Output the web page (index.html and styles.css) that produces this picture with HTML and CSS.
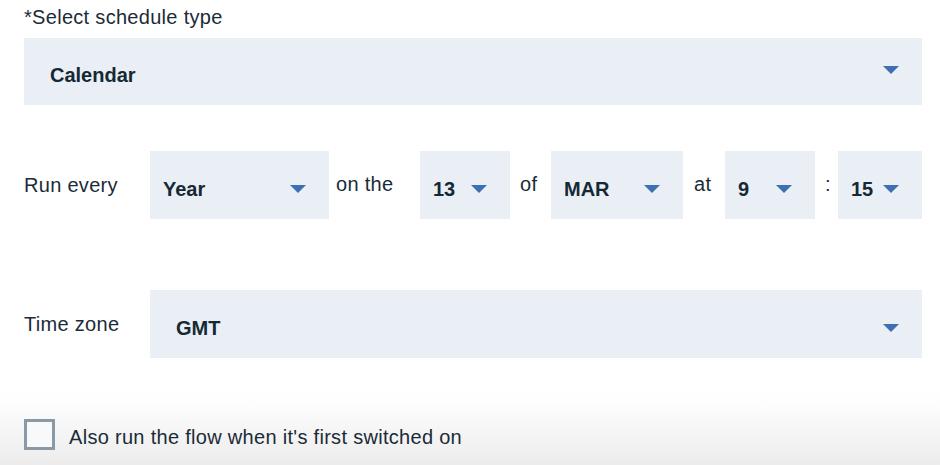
FILE: index.html
```html
<!DOCTYPE html>
<html>
<head>
<meta charset="utf-8">
<link rel="stylesheet" href="styles.css">
</head>
<body>
<div class="page">
  <div class="field-label">*Select schedule type</div>
  <div class="select select-wide select-first">
    <span class="value">Calendar</span>
    <span class="arrow"></span>
  </div>

  <div class="row row-run">
    <div class="row-label">Run every</div>
    <div class="select s-year"><span class="value">Year</span><span class="arrow"></span></div>
    <div class="conn c-onthe">on the</div>
    <div class="select s-day"><span class="value">13</span><span class="arrow"></span></div>
    <div class="conn c-of">of</div>
    <div class="select s-month"><span class="value">MAR</span><span class="arrow"></span></div>
    <div class="conn c-at">at</div>
    <div class="select s-hour"><span class="value">9</span><span class="arrow"></span></div>
    <div class="conn c-colon">:</div>
    <div class="select s-min"><span class="value">15</span><span class="arrow"></span></div>
  </div>

  <div class="row row-tz">
    <div class="row-label">Time zone</div>
    <div class="select select-fill"><span class="value">GMT</span><span class="arrow"></span></div>
  </div>
</div>
<div class="footer">
  <label class="check">
    <span class="box"></span>
    <span class="check-text">Also run the flow when it's first switched on</span>
  </label>
</div>
</body>
</html>
```

FILE: styles.css
```css
* { box-sizing: border-box; }
html, body {
  margin: 0;
  padding: 0;
  background: #ffffff;
  width: 940px;
  height: 465px;
  overflow: hidden;
}
body {
  font-family: "Liberation Sans", Arial, sans-serif;
  font-size: 20px;
  letter-spacing: 0.3px;
  color: #1b2b38;
}
.page {
  padding: 0 18px 0 24px;
}
.field-label {
  height: 38px;
  padding-top: 5px;
  line-height: 24px;
}
.select {
  background: #eaeff6;
  display: flex;
  align-items: center;
  padding: 0 23px 0 13px;
  position: relative;
}
.select .value {
  font-weight: 700;
  font-size: 20px;
  letter-spacing: 0;
  color: #152935;
  flex: 1;
  padding-top: 8px;
}
.arrow {
  width: 0;
  height: 0;
  border-left: 8px solid transparent;
  border-right: 8px solid transparent;
  border-top: 8px solid #3d70b2;
  flex: none;
}
.select-first {
  height: 67px;
  padding-left: 26px;
}
.select-first .value { padding-top: 7px; }
.select-first .arrow { margin-top: -3px; }

.row {
  display: flex;
  align-items: center;
  height: 68px;
}
.row .select { height: 68px; }
.row .select .arrow { margin-top: 8px; }
.row-run { margin-top: 46px; }
.row-tz { margin-top: 71px; }
.row-label {
  width: 126px;
  flex: none;
  line-height: 24px;
  padding-bottom: 1px;
}
.conn {
  flex: none;
  line-height: 24px;
  padding-bottom: 2px;
}
.c-onthe { width: 91px; padding-left: 7px; }
.c-of { width: 41px; padding-left: 10px; }
.c-at { width: 42px; padding-left: 11px; }
.c-colon { width: 23px; padding-left: 10px; }
.s-year { width: 179px; }
.s-day { width: 90px; }
.s-month { width: 132px; }
.s-hour { width: 90px; }
.s-min { width: 84px; }
.select-fill {
  flex: 1;
  padding-left: 26px;
}

.footer {
  margin-top: 26px;
  height: 81px;
  padding: 35px 0 0 24px;
  background: linear-gradient(to bottom, #ffffff 0%, #fdfdfd 25%, #f6f6f6 55%, #ececec 100%);
}
.check {
  display: flex;
  align-items: center;
}
.box {
  width: 31px;
  height: 31px;
  border: 3px solid #8a99a4;
  background: #f8f9fa;
  flex: none;
}
.check-text {
  margin-left: 14px;
  padding-top: 5px;
  line-height: 24px;
  color: #1b2b38;
}
```
